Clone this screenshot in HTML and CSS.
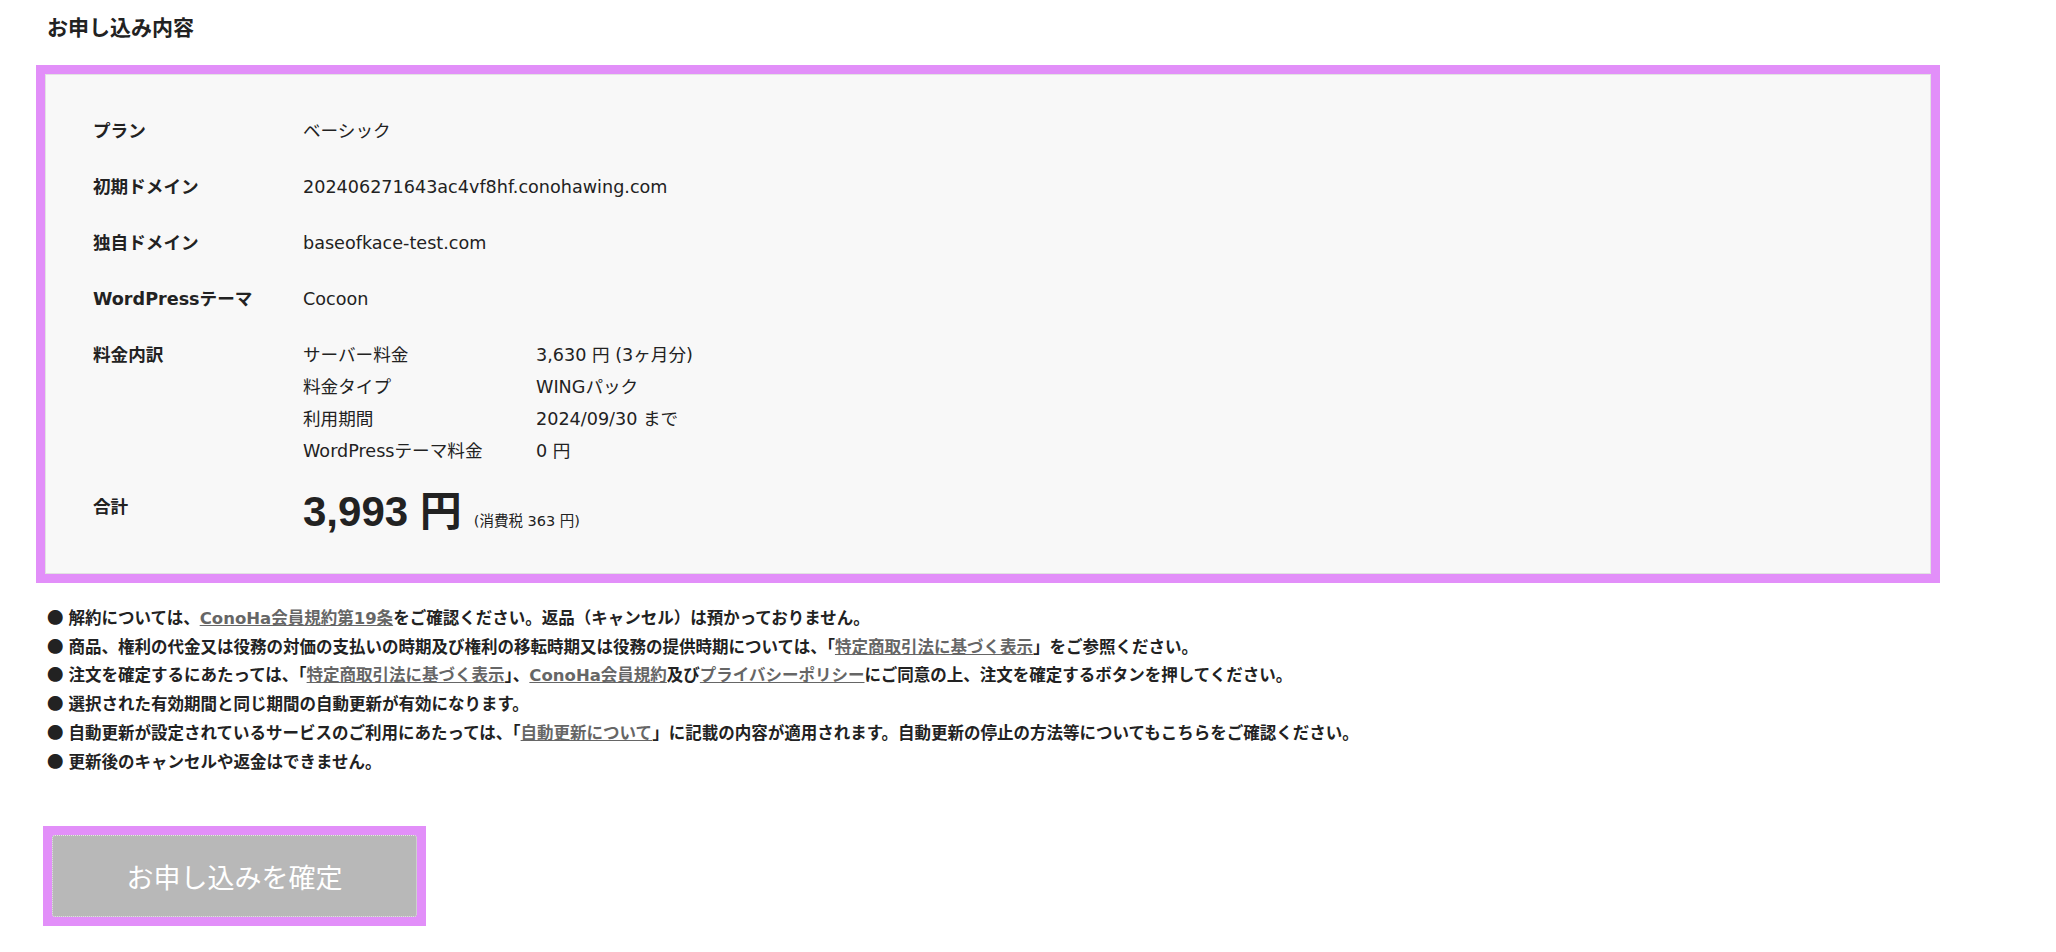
FILE: index.html
```html
<!DOCTYPE html>
<html lang="ja">

<head>
    <meta charset="UTF-8">
    <title>お申し込み内容</title>
    <link rel="stylesheet" href="styles.css">
</head>

<body>
    <div class="page">
        <h2 class="title">お申し込み内容</h2>

        <dl class="summary">
            <div class="row">
                <dt>プラン</dt>
                <dd>ベーシック</dd>
            </div>
            <div class="row">
                <dt>初期ドメイン</dt>
                <dd>202406271643ac4vf8hf.conohawing.com</dd>
            </div>
            <div class="row">
                <dt>独自ドメイン</dt>
                <dd>baseofkace-test.com</dd>
            </div>
            <div class="row">
                <dt>WordPressテーマ</dt>
                <dd>Cocoon</dd>
            </div>
            <div class="row">
                <dt>料金内訳</dt>
                <dd>
                    <ul class="breakdown">
                        <li><span class="item">サーバー料金</span><span>3,630 円 (3ヶ月分)</span></li>
                        <li><span class="item">料金タイプ</span><span>WINGパック</span></li>
                        <li><span class="item">利用期間</span><span>2024/09/30 まで</span></li>
                        <li><span class="item">WordPressテーマ料金</span><span>0 円</span></li>
                    </ul>
                </dd>
            </div>
            <div class="row total">
                <dt>合計</dt>
                <dd><span class="price">3,993 円</span><span class="tax">(消費税 363 円)</span></dd>
            </div>
        </dl>

        <ul class="notes">
            <li><span class="dot">●</span>解約については、<a href="#">ConoHa会員規約第19条</a>をご確認ください。返品（キャンセル）は預かっておりません。</li>
            <li><span class="dot">●</span>商品、権利の代金又は役務の対価の支払いの時期及び権利の移転時期又は役務の提供時期については、「<a href="#">特定商取引法に基づく表示</a>」をご参照ください。</li>
            <li><span class="dot">●</span>注文を確定するにあたっては、「<a href="#">特定商取引法に基づく表示</a>」、<a href="#">ConoHa会員規約</a>及び<a href="#">プライバシーポリシー</a>にご同意の上、注文を確定するボタンを押してください。</li>
            <li><span class="dot">●</span>選択された有効期間と同じ期間の自動更新が有効になります。</li>
            <li><span class="dot">●</span>自動更新が設定されているサービスのご利用にあたっては、「<a href="#">自動更新について</a>」に記載の内容が適用されます。自動更新の停止の方法等についてもこちらをご確認ください。</li>
            <li><span class="dot">●</span>更新後のキャンセルや返金はできません。</li>
        </ul>

        <div class="submit-wrap">
            <button class="submit">お申し込みを確定</button>
        </div>
    </div>
</body>

</html>
```

FILE: styles.css
```css
body,
html {
    margin: 0;
}

body {
    font-family: "DejaVu Sans", "Noto Sans CJK JP", sans-serif;
    color: #222;
    background-color: #fff;
}

ul {
    margin: 0;
    padding: 0;
    list-style-type: none;
}

.page {
    width: 1886px;
    padding: 13px 0 26px 47px;
}

.title {
    margin: 0;
    font-size: 21px;
    line-height: 31px;
    font-weight: bold;
}

/* 申込内容のボックス */
.summary {
    margin: 30px 2px 0 -2px;
    padding: 40px 47px;
    background-color: #f8f8f8;
    border: 1px solid #e2e2e2;
    outline: 9px solid #e28ff9;
}

.row {
    display: flex;
    align-items: flex-start;
    margin-bottom: 24px;
    font-size: 17.6px;
    line-height: 32px;
}

.row:last-child {
    margin-bottom: 0;
}

.row dt {
    width: 210px;
    flex-shrink: 0;
    font-weight: bold;
}

.row dd {
    margin: 0;
}

.breakdown li {
    display: flex;
}

.breakdown .item {
    width: 233px;
}

.total dd {
    font-size: 42px;
    line-height: 42px;
}

.price {
    font-family: "Liberation Sans", "Noto Sans CJK JP", sans-serif;
    font-weight: bold;
}

.tax {
    margin-left: 12px;
    font-size: 14.5px;
    line-height: 1;
}

/* 注意事項 */
.notes {
    margin-top: 31px;
    font-size: 16.5px;
    line-height: 28.7px;
    font-weight: bold;
}

.notes a {
    color: #666;
    text-decoration: underline;
}

.dot {
    font-family: "Noto Sans CJK JP", sans-serif;
    line-height: 1;
    margin-right: 5px;
}

.submit-wrap {
    display: inline-block;
    margin: 49px 0 0 -4px;
    padding: 9px;
    background-color: #e28ff9;
}

.submit {
    display: block;
    width: 365px;
    height: 82px;
    font-family: "Noto Sans CJK JP", sans-serif;
    font-size: 27px;
    color: #fff;
    background-color: #b8b8b8;
    border: 1px dotted #e6e6e6;
    border-radius: 3px;
}
```
